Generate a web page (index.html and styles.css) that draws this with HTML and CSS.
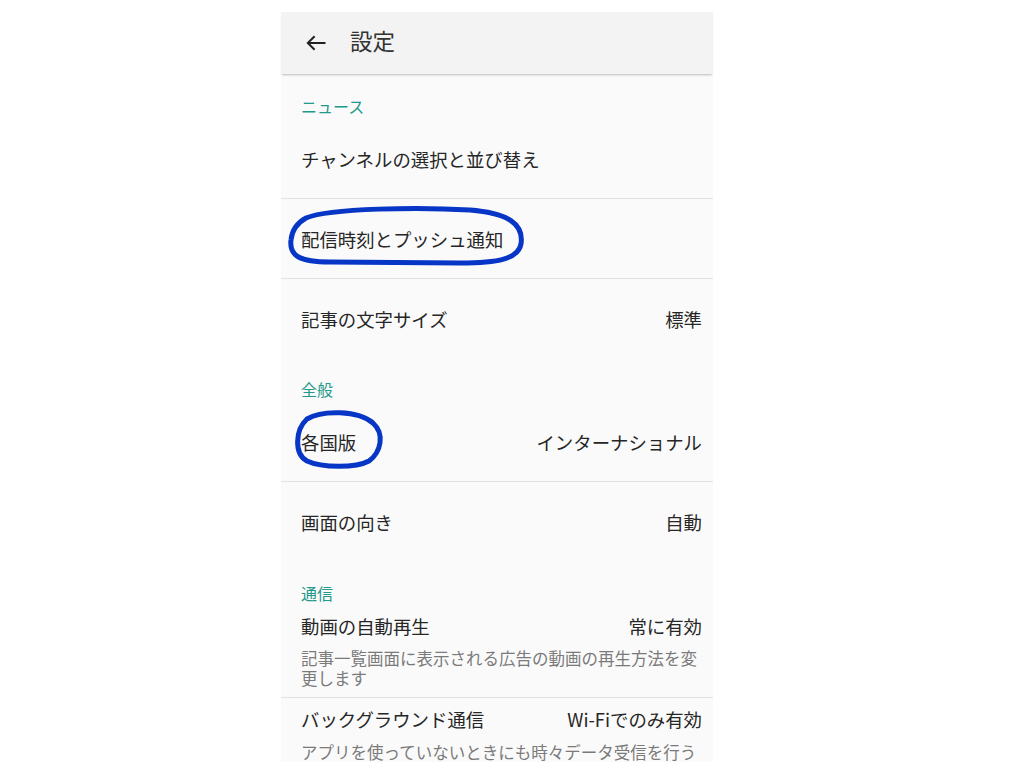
FILE: index.html
```html
<!DOCTYPE html>
<html>

<head>
    <title>設定</title>
    <link rel="stylesheet" href="styles.css">
</head>

<body>
    <main class="phone">
        <header class="bar">
            <svg class="back" width="20" height="16" viewBox="0 0 20 16">
                <path d="M19.5 8H1.8M8.6 1.2L1.8 8l6.8 6.8" fill="none" stroke="#222" stroke-width="2" />
            </svg>
            <h1>設定</h1>
        </header>

        <section class="group">
            <h2>ニュース</h2>
            <div class="item line"><span>チャンネルの選択と並び替え</span></div>
            <div class="item line"><span>配信時刻とプッシュ通知</span></div>
            <div class="item"><span>記事の文字サイズ</span><span>標準</span></div>
        </section>

        <section class="group">
            <h2 class="near">全般</h2>
            <div class="item line"><span>各国版</span><span>インターナショナル</span></div>
            <div class="item"><span>画面の向き</span><span>自動</span></div>
        </section>

        <section class="group">
            <h2>通信</h2>
            <div class="item tall line">
                <div class="row"><span>動画の自動再生</span><span>常に有効</span></div>
                <p>記事一覧画面に表示される広告の動画の再生方法を変更します</p>
            </div>
            <div class="item tall">
                <div class="row"><span>バックグラウンド通信</span><span>Wi-Fiでのみ有効</span></div>
                <p>アプリを使っていないときにも時々データ受信を行う</p>
            </div>
        </section>

        <svg class="marks" width="432" height="750" viewBox="281 12 432 750">
            <path d="M306 218 C330 208 420 207 470 210 C508 213 524 224 521 244 C518 259 498 263 460 263 L330 262 C300 262 289 256 291 240 C292 230 297 223 306 218"
                fill="none" stroke="#0735c6" stroke-width="5" stroke-linecap="round" />
            <path d="M307 419 C322 410 358 410 373 423 C385 434 381 452 369 461 C356 468 322 468 307 461 C294 454 295 430 307 419"
                fill="none" stroke="#0735c6" stroke-width="5" stroke-linecap="round" />
        </svg>
    </main>
</body>

</html>
```

FILE: styles.css
```css
body {
    margin: 0;
    background: #fff;
    font-family: "Noto Sans CJK JP", "Noto Sans", sans-serif;
    color: #262626;
}

.phone {
    position: relative;
    width: 432px;
    height: 750px;
    margin: 12px 0 0 281px;
    background: #fafafa;
}

.bar {
    display: flex;
    align-items: center;
    height: 62px;
    padding-left: 25px;
    background: #f3f3f3;
    box-shadow: 0 2px 2px -1px rgba(0, 0, 0, .25);
    position: relative;
}

.back {
    margin-right: 24px;
}

.bar h1 {
    margin: 0 0 6px;
    font-size: 22.5px;
    font-weight: normal;
    color: #333;
    line-height: 28px;
}

.group h2 {
    margin: 0;
    padding: 21px 20px 2px;
    font-size: 16px;
    line-height: 22px;
    font-weight: normal;
    color: #22998a;
}

.group h2.near {
    padding-top: 20px;
}

.item {
    display: flex;
    justify-content: space-between;
    align-items: center;
    height: 79px;
    padding: 0 11px 0 20px;
    font-size: 18.4px;
    line-height: 24px;
}

.item.line {
    border-bottom: 1px solid #e2e2e2;
}

.item.tall {
    display: block;
    height: auto;
    padding-top: 8px;
    padding-bottom: 9px;
}

.item.tall + .item.tall {
    padding-top: 9px;
    padding-bottom: 0;
}

.item.tall + .item.tall p {
    margin-top: 12px;
    line-height: 18px;
}

.row {
    display: flex;
    justify-content: space-between;
}

.item p {
    margin: 10px 0 0;
    font-size: 16.5px;
    line-height: 20px;
    color: #7a7a7a;
}

.marks {
    position: absolute;
    left: 0;
    top: 0;
}
```
